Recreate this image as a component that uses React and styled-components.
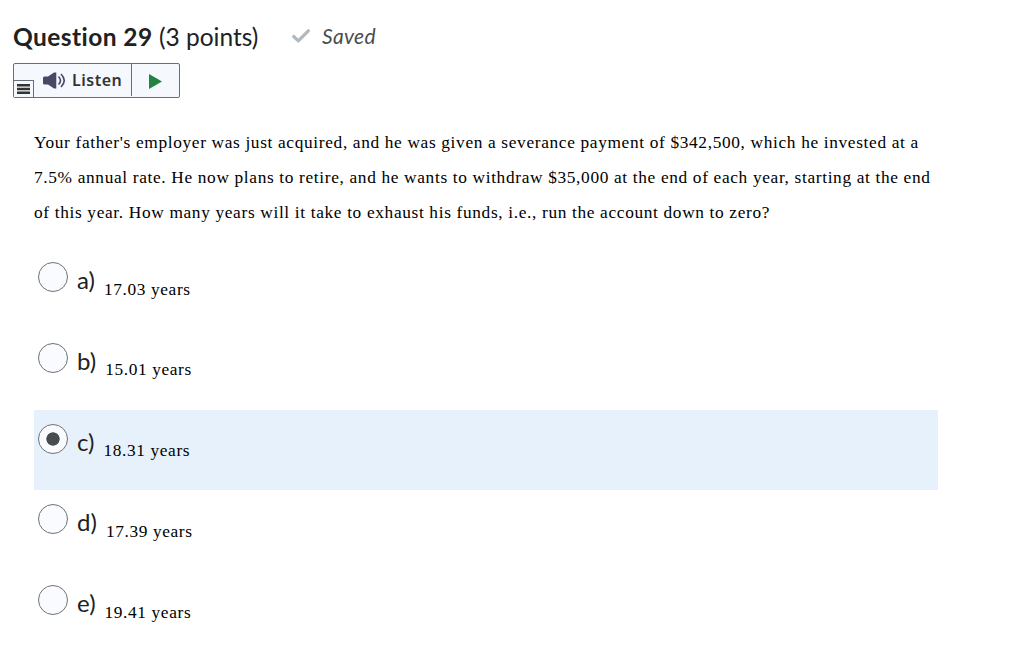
import styled, { createGlobalStyle } from 'styled-components';


const GlobalStyle = createGlobalStyle`
  body {
    background: white;
    color: #202122;
    font-family: Lato, sans-serif;
    margin: 0;
  }
`;

const Page = styled.main`
  box-sizing: border-box;
  height: 647px;
  overflow: hidden;
  padding: 20px 91px 0 13px;
`;

const Header = styled.header`
  align-items: center;
  display: flex;
  height: 32px;
`;

const Title = styled.h2`
  font-size: 24.5px;
  font-weight: 400;
  line-height: 32px;
  margin: 1px 0 0;
  white-space: nowrap;
  width: 279px;

  b {
    letter-spacing: .43px;
  }
`;

const Saved = styled.span`
  color: #494c4e;
  font-size: 21px;
  font-style: italic;
  letter-spacing: .3px;
  line-height: 24px;
  margin: 0 0 0 12px;
`;

const Reader = styled.div`
  background: #f5f9fd;
  border: 1px solid #686f79;
  border-radius: 2px;
  box-sizing: border-box;
  display: flex;
  height: 35px;
  margin-top: 11px;
  width: 167px;
`;

const MenuButton = styled.button`
  align-items: center;
  align-self: flex-end;
  background: #f5f9fd;
  border: 1px solid #686f79;
  border-bottom: 0;
  border-left: 0;
  box-sizing: border-box;
  display: flex;
  height: 17px;
  justify-content: center;
  padding: 0;
  width: 20px;
`;

const ListenButton = styled.button`
  align-items: center;
  background: none;
  border: 0;
  border-right: 1px solid #686f79;
  box-sizing: border-box;
  color: #333;
  display: flex;
  font: 600 16px 'Noto Sans', sans-serif;
  gap: 6px;
  height: 32px;
  letter-spacing: .5px;
  padding: 0 0 0 9px;
  width: 98px;
`;

const PlayButton = styled.button`
  align-items: center;
  background: none;
  border: 0;
  display: flex;
  flex: 1;
  justify-content: center;
  padding: 2px 0 0;
`;

const Prompt = styled.p`
  color: black;
  font: 17.33px/35px 'Liberation Serif', serif;
  letter-spacing: .65px;
  margin: 27px 0 0 21px;
  white-space: nowrap;
`;

const Answers = styled.div`
  display: flex;
  flex-direction: column;
  gap: .75px;
  margin: 18px 0 0 21px;
`;

const Answer = styled.label`
  align-items: flex-start;
  background: ${({ $selected }) => $selected ? '#e7f1fc' : 'transparent'};
  box-sizing: border-box;
  display: flex;
  height: 80px;
  padding: 14px 4px 0;
  width: 904px;
`;

const Radio = styled.input.attrs({ type: 'radio' })`
  appearance: none;
  background: ${({ checked }) => checked
    ? 'radial-gradient(circle, #494c4e 6.3px, #f9fbff 7px)'
    : '#f9fbff'};
  border: 1px solid #6e7376;
  border-radius: 50%;
  box-sizing: border-box;
  flex: none;
  height: 30px;
  margin: 0;
  width: 30px;
`;

const Letter = styled.span`
  font-size: 24px;
  line-height: 30px;
  margin: 3px 9px 0;
`;

const AnswerText = styled.span`
  color: black;
  font: 17.33px/24px 'Liberation Serif', serif;
  letter-spacing: .62px;
  margin-top: 15.5px;
`;

const answers = [
  { letter: 'a', text: '17.03 years' },
  { letter: 'b', text: '15.01 years' },
  { letter: 'c', text: '18.31 years', selected: true },
  { letter: 'd', text: '17.39 years' },
  { letter: 'e', text: '19.41 years' },
];


export default function App() {
  return <Page>
    <GlobalStyle/>
    <Header>
      <Title><b>Question 29</b> (3 points)</Title>
      <svg width="18" height="14" viewBox="0 0 18 14" fill="none">
        <path d="M1.7 7.5 6.3 11.9 16.3 1.8" stroke="#b1b9be" strokeWidth="3.2" strokeLinecap="round" strokeLinejoin="round"/>
      </svg>
      <Saved>Saved</Saved>
    </Header>
    <Reader>
      <MenuButton aria-label="Menu">
        <svg width="13" height="10" viewBox="0 0 13 10">
          <path d="M0 0h13v2.4H0zM0 3.8h13v2.4H0zM0 7.6h13V10H0z" fill="#333"/>
        </svg>
      </MenuButton>
      <ListenButton>
        <svg width="23" height="17" viewBox="0 0 23 17">
          <path d="M0 6q0-1.5 1.5-1.5H5L11 .5h2.3v16H11L5 12.5H1.5Q0 12.5 0 11z" fill="#484766"/>
          <path d="M15.5 4.5q4 4 0 8M18 2q6.5 6.5 0 13" fill="none" stroke="#484766" strokeWidth="1.6"/>
        </svg>
        Listen
      </ListenButton>
      <PlayButton aria-label="Play">
        <svg width="13" height="15" viewBox="0 0 13 15">
          <path d="M0 0 13 7.5 0 15z" fill="#23833f"/>
        </svg>
      </PlayButton>
    </Reader>
    <Prompt>
      Your father's employer was just acquired, and he was given a severance payment of $342,500, which he invested at a<br/>
      7.5% annual rate. He now plans to retire, and he wants to withdraw $35,000 at the end of each year, starting at the end<br/>
      of this year. How many years will it take to exhaust his funds, i.e., run the account down to zero?
    </Prompt>
    <Answers>
      {answers.map(({ letter, text, selected }) => <Answer key={letter} $selected={selected}>
        <Radio name="answer" checked={!!selected} readOnly/>
        <Letter>{letter})</Letter>
        <AnswerText>{text}</AnswerText>
      </Answer>)}
    </Answers>
  </Page>;
}
